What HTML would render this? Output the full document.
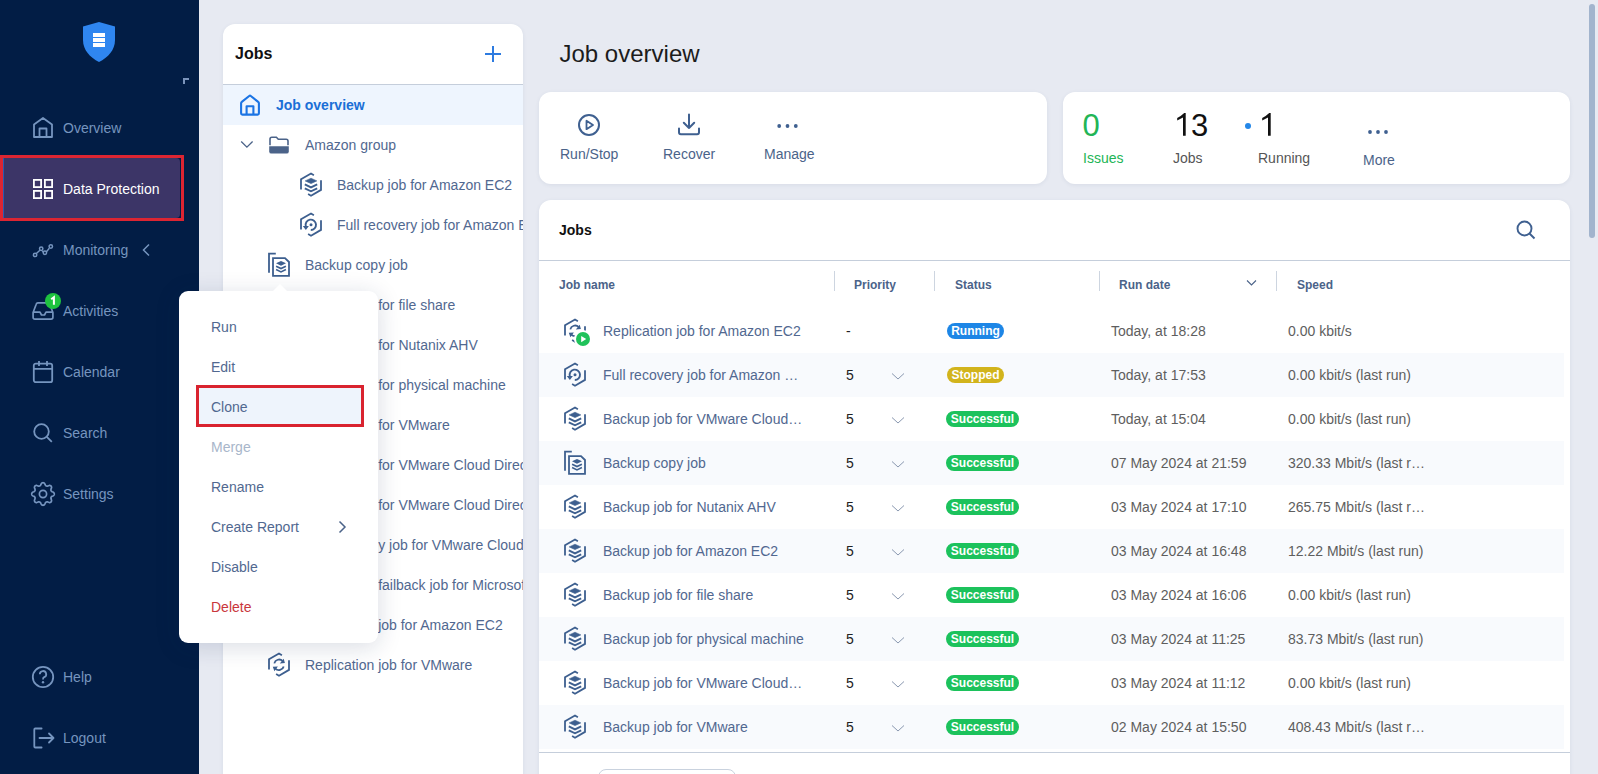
<!DOCTYPE html>
<html><head><meta charset="utf-8">
<style>
*{margin:0;padding:0;box-sizing:border-box}
html,body{width:1598px;height:774px;overflow:hidden;background:#e7eaf2;font-family:"Liberation Sans",sans-serif;position:relative}
.a{position:absolute;white-space:nowrap;line-height:1}
svg.i{position:absolute;overflow:visible}
#side{position:absolute;left:0;top:0;width:199px;height:774px;background:#021d45}
.nav{position:absolute;left:63px;font-size:14px;color:#7695bf;line-height:1}
.card{position:absolute;background:#fff;border-radius:12px;box-shadow:0 1px 4px rgba(40,60,100,.08)}
.tree{font-size:14px;color:#516890}
.th{font-size:12px;font-weight:bold;color:#4b6389}
.row{position:absolute;left:539px;width:1025px;height:44px}
.alt{background:#f8fafd}
.jn{font-size:14px;color:#516890}
.pr{font-size:14px;color:#222}
.dt{font-size:14px;color:#5e5e5e}
.badge{position:absolute;height:16px;border-radius:8px;color:#fff;font-weight:bold;font-size:12px;line-height:16px;text-align:center}
.mi{position:absolute;left:211px;font-size:14px;color:#516890;line-height:1}
</style></head><body>
<svg width="0" height="0" style="position:absolute">
<defs>
<symbol id="hx" viewBox="0 0 30 30"><path d="M5 19.4V9.3L15 3.5L17.9 5.2M25 10.3V19.9L15 25.7L12.1 24" fill="none" stroke="currentColor" stroke-width="1.8"/></symbol>
<symbol id="bk" viewBox="0 0 30 30"><use href="#hx"/><path d="M9.2 10.9L15 8.2L20.8 10.9L15 13.6Z" fill="currentColor" stroke="currentColor" stroke-width="0.6" stroke-linejoin="round"/><path d="M8.8 14.4L15 17.4L21.2 14.4M8.8 18.4L15 21.3L21.2 18.4" fill="none" stroke="currentColor" stroke-width="1.9"/></symbol>
<symbol id="rc" viewBox="0 0 30 30"><use href="#hx"/><path d="M14.8 20A5.2 5.2 0 1 0 9.8 16.2" fill="none" stroke="currentColor" stroke-width="1.9"/><path d="M6.8 15.9H12.9L9.85 19.9Z" fill="currentColor"/><circle cx="15" cy="14.7" r="1.5" fill="currentColor"/></symbol>
<symbol id="rp" viewBox="0 0 30 30"><use href="#hx"/><path d="M10.3 13.4A5 5 0 0 1 18.6 10.9M19.7 16.4A5 5 0 0 1 11.3 18.6" fill="none" stroke="currentColor" stroke-width="1.8"/><path d="M15.8 13.4L20.9 12.9L19.7 8.8Z M8.8 16.7L10.4 21.2L13.9 16.6Z" fill="currentColor"/></symbol>
<symbol id="cp" viewBox="0 0 40 40"><g transform="translate(2 2)"><path d="M9 24.7V5.6H15.8" fill="none" stroke="currentColor" stroke-width="1.8"/><path d="M13 10.1H25L29 14V27.8H13Z" fill="none" stroke="currentColor" stroke-width="1.8"/><path d="M16 15.3L21 12.9L26 15.3L21 17.7Z" fill="currentColor"/><path d="M16.1 18.3L21 20.6L25.9 18.3M16.1 21.6L21 23.9L25.9 21.6" fill="none" stroke="currentColor" stroke-width="1.7"/></g></symbol>
</defs></svg>

<!-- SIDEBAR -->

<div id="side">
<svg class="i" style="left:70px;top:10px" width="60" height="60" viewBox="0 0 60 60"><path d="M13 16.5L29 12L45 16.5V30C45 40 38 47.5 29 52C20 47.5 13 40 13 30Z" fill="#2f86f0"/><rect x="23" y="23" width="12" height="4" fill="#fff"/><rect x="23" y="28" width="12" height="4" fill="#fff"/><rect x="23" y="33" width="12" height="4" fill="#fff"/></svg>
<svg class="i" style="left:182px;top:77px" width="10" height="10" viewBox="0 0 10 10"><path d="M2 7V2H7" fill="none" stroke="#7b94bb" stroke-width="2"/></svg>

<svg class="i" style="left:32px;top:116px" width="24" height="24" viewBox="0 0 24 24"><path d="M2 21V8.5L11 2L20 8.5V21Z M7.5 21V12.5H14.5V21" fill="none" stroke="#7695bf" stroke-width="1.8" stroke-linejoin="round"/></svg>
<div class="nav" style="top:121px">Overview</div>

<div style="position:absolute;left:3px;top:158px;width:177px;height:60px;background:#3c3567;border-radius:0 4px 4px 0;border-left:1.5px solid #2a5bb0"></div>
<div style="position:absolute;left:0;top:155px;width:184px;height:66px;border:3.5px solid #dc2532;"></div>
<svg class="i" style="left:33px;top:179px" width="20" height="20" viewBox="0 0 20 20"><g fill="none" stroke="#fff" stroke-width="1.8"><rect x="0.9" y="0.9" width="7.2" height="7.2"/><rect x="11.9" y="0.9" width="7.2" height="7.2"/><rect x="0.9" y="11.9" width="7.2" height="7.2"/><rect x="11.9" y="11.9" width="7.2" height="7.2"/></g></svg>
<div class="nav" style="top:182px;color:#fff">Data Protection</div>

<svg class="i" style="left:33px;top:243px" width="20" height="16" viewBox="0 0 20 16"><g fill="none" stroke="#7695bf" stroke-width="1.5"><path d="M3.1 10.7L6.9 7.2M9.3 7.9L10.8 9.5M13.2 9.1L16.3 5.2"/><circle cx="2.1" cy="11.9" r="1.7"/><circle cx="8.2" cy="5.7" r="1.7"/><circle cx="11.9" cy="9.7" r="1.7"/><circle cx="17.8" cy="3.5" r="1.7"/></g></svg>
<div class="nav" style="top:243px">Monitoring</div>
<svg class="i" style="left:141px;top:243px" width="10" height="14" viewBox="0 0 10 14"><path d="M8 1.5L2.5 7L8 12.5" fill="none" stroke="#7695bf" stroke-width="1.5"/></svg>

<svg class="i" style="left:32px;top:302px" width="22" height="18" viewBox="0 0 22 18"><path d="M5.9 0.9H16.1Q17.4 0.9 17.8 2.3L20.9 10.5V15.2Q20.9 17.1 19 17.1H3Q1.1 17.1 1.1 15.2V10.5L4.2 2.3Q4.6 0.9 5.9 0.9Z M1.1 10.2H8L9.5 13H12.5L14 10.2H20.9" fill="none" stroke="#7695bf" stroke-width="1.7" stroke-linejoin="round"/></svg>
<div style="position:absolute;left:45px;top:293px;width:16px;height:16px;border-radius:50%;background:#1ec33f"></div><svg class="i" style="left:45px;top:293px" width="16" height="16" viewBox="0 0 16 16"><path d="M6.2 6.2L8.9 4.2V11.8" fill="none" stroke="#fff" stroke-width="2"/></svg>
<div class="nav" style="top:304px">Activities</div>

<svg class="i" style="left:32px;top:360px" width="22" height="24" viewBox="0 0 22 24"><g fill="none" stroke="#7695bf" stroke-width="1.8"><rect x="1.8" y="3.6" width="18.4" height="18.6" rx="2"/><path d="M1.8 8.8H20.2M7 1V6M15 1V6"/></g></svg>
<div class="nav" style="top:365px">Calendar</div>

<svg class="i" style="left:32px;top:422px" width="22" height="22" viewBox="0 0 22 22"><g fill="none" stroke="#7695bf" stroke-width="1.8"><circle cx="9.5" cy="9.5" r="7.3"/><path d="M14.8 14.8L19.8 19.8"/></g></svg>
<div class="nav" style="top:426px">Search</div>

<svg class="i" style="left:30px;top:481px" width="26" height="26" viewBox="0 0 26 26"><g fill="none" stroke="#7695bf" stroke-width="1.7" stroke-linejoin="round"><path d="M13.00 1.70L13.44 1.75L13.87 1.91L14.28 2.18L14.65 2.56L14.95 3.19L15.20 3.83L15.47 4.24L15.74 4.56L16.03 4.80L16.33 4.96L16.66 5.06L17.03 5.09L17.45 5.06L17.93 4.96L18.56 4.69L19.21 4.45L19.75 4.44L20.22 4.54L20.64 4.74L20.99 5.01L21.26 5.36L21.46 5.78L21.56 6.25L21.55 6.79L21.31 7.44L21.04 8.07L20.94 8.55L20.91 8.97L20.94 9.34L21.04 9.67L21.20 9.97L21.44 10.26L21.76 10.53L22.17 10.80L22.81 11.05L23.44 11.35L23.82 11.72L24.09 12.13L24.25 12.56L24.30 13.00L24.25 13.44L24.09 13.87L23.82 14.28L23.44 14.65L22.81 14.95L22.17 15.20L21.76 15.47L21.44 15.74L21.20 16.03L21.04 16.33L20.94 16.66L20.91 17.03L20.94 17.45L21.04 17.93L21.31 18.56L21.55 19.21L21.56 19.75L21.46 20.22L21.26 20.64L20.99 20.99L20.64 21.26L20.22 21.46L19.75 21.56L19.21 21.55L18.56 21.31L17.93 21.04L17.45 20.94L17.03 20.91L16.66 20.94L16.33 21.04L16.03 21.20L15.74 21.44L15.47 21.76L15.20 22.17L14.95 22.81L14.65 23.44L14.28 23.82L13.87 24.09L13.44 24.25L13.00 24.30L12.56 24.25L12.13 24.09L11.72 23.82L11.35 23.44L11.05 22.81L10.80 22.17L10.53 21.76L10.26 21.44L9.97 21.20L9.67 21.04L9.34 20.94L8.97 20.91L8.55 20.94L8.07 21.04L7.44 21.31L6.79 21.55L6.25 21.56L5.78 21.46L5.36 21.26L5.01 20.99L4.74 20.64L4.54 20.22L4.44 19.75L4.45 19.21L4.69 18.56L4.96 17.93L5.06 17.45L5.09 17.03L5.06 16.66L4.96 16.33L4.80 16.03L4.56 15.74L4.24 15.47L3.83 15.20L3.19 14.95L2.56 14.65L2.18 14.28L1.91 13.87L1.75 13.44L1.70 13.00L1.75 12.56L1.91 12.13L2.18 11.72L2.56 11.35L3.19 11.05L3.83 10.80L4.24 10.53L4.56 10.26L4.80 9.97L4.96 9.67L5.06 9.34L5.09 8.97L5.06 8.55L4.96 8.07L4.69 7.44L4.45 6.79L4.44 6.25L4.54 5.78L4.74 5.36L5.01 5.01L5.36 4.74L5.78 4.54L6.25 4.44L6.79 4.45L7.44 4.69L8.07 4.96L8.55 5.06L8.97 5.09L9.34 5.06L9.67 4.96L9.97 4.80L10.26 4.56L10.53 4.24L10.80 3.83L11.05 3.19L11.35 2.56L11.72 2.18L12.13 1.91L12.56 1.75Z"/><circle cx="13" cy="13" r="3.6"/></g></svg>
<div class="nav" style="top:487px">Settings</div>

<svg class="i" style="left:31px;top:665px" width="24" height="24" viewBox="0 0 24 24"><g fill="none" stroke="#7695bf" stroke-width="1.8"><circle cx="12" cy="12" r="10.2"/><path d="M8.8 9.2A3.2 3.2 0 1 1 13.2 12.2C12.2 12.6 12 13.2 12 14.4"/></g><circle cx="12" cy="17.3" r="1.2" fill="#7695bf"/></svg>
<div class="nav" style="top:670px">Help</div>

<svg class="i" style="left:32px;top:727px" width="24" height="22" viewBox="0 0 24 22"><g fill="none" stroke="#7695bf" stroke-width="1.8"><path d="M9.6 1.5H3.3Q2.3 1.5 2.3 2.5V19.5Q2.3 20.5 3.3 20.5H9.6M7.5 11H21.5M17 6.5L21.5 11L17 15.5" stroke-linejoin="round" stroke-linecap="round"/></g></svg>
<div class="nav" style="top:731px">Logout</div>
</div>



<!-- MAIN -->
<div class="a" style="left:559.5px;top:42px;font-size:24px;color:#1c1c1c">Job overview</div>

<div class="card" style="left:539px;top:92px;width:508px;height:92px">
<svg class="i" style="left:38px;top:21px" width="24" height="24" viewBox="0 0 24 24"><circle cx="12" cy="12" r="10" fill="none" stroke="#3f6090" stroke-width="2"/><path d="M9.5 7.8V16.2L16 12Z" fill="none" stroke="#3f6090" stroke-width="1.8" stroke-linejoin="round"/></svg>
<div class="a" style="left:21px;top:55px;font-size:14px;color:#4b6389">Run/Stop</div>
<svg class="i" style="left:138px;top:21px" width="24" height="24" viewBox="0 0 24 24"><path d="M12 1.5V15M6.8 9.8L12 15L17.2 9.8M2 15.5V19.3Q2 21.2 3.9 21.2H20.1Q22 21.2 22 19.3V15.5" fill="none" stroke="#3f6090" stroke-width="2" stroke-linejoin="round" stroke-linecap="round"/></svg>
<div class="a" style="left:124px;top:55px;font-size:14px;color:#4b6389">Recover</div>
<svg class="i" style="left:238px;top:30px" width="22" height="8" viewBox="0 0 22 8"><g fill="#3f6090"><circle cx="2.2" cy="4" r="1.9"/><circle cx="10.5" cy="4" r="1.9"/><circle cx="18.8" cy="4" r="1.9"/></g></svg>
<div class="a" style="left:225px;top:55px;font-size:14px;color:#4b6389">Manage</div>
</div>

<div class="card" style="left:1063px;top:92px;width:507px;height:92px">
<div class="a" style="left:19.5px;top:17.5px;font-size:31px;color:#22b556">0</div>
<div class="a" style="left:20px;top:59px;font-size:14px;color:#22b556">Issues</div>
<svg class="i" style="left:113.5px;top:21.2px" width="10" height="24" viewBox="0 0 10 24"><path d="M6 22.8V4.6L0.2 7.5V4.9Q4.5 2.8 7.2 0H8.7V22.8Z" fill="#111"/></svg><div class="a" style="left:128px;top:18px;font-size:31px;color:#111">3</div>
<div class="a" style="left:110px;top:59px;font-size:14px;color:#555">Jobs</div>
<div style="position:absolute;left:181.5px;top:30.8px;width:6.5px;height:6.5px;border-radius:50%;background:#2487e8"></div>
<svg class="i" style="left:199px;top:21.2px" width="10" height="24" viewBox="0 0 10 24"><path d="M6 22.8V4.6L0.2 7.5V4.9Q4.5 2.8 7.2 0H8.7V22.8Z" fill="#111"/></svg>
<div class="a" style="left:195px;top:59px;font-size:14px;color:#555">Running</div>
<svg class="i" style="left:304px;top:36px" width="22" height="8" viewBox="0 0 22 8"><g fill="#3f6090"><circle cx="3" cy="4" r="1.9"/><circle cx="11" cy="4" r="1.9"/><circle cx="19" cy="4" r="1.9"/></g></svg>
<div class="a" style="left:300px;top:61px;font-size:14px;color:#4b6389">More</div>
</div>

<div class="card" style="left:539px;top:200px;width:1031px;height:600px;border-radius:12px 12px 0 0">
<div class="a" style="left:20px;top:23px;font-size:14px;font-weight:bold;color:#111">Jobs</div>
<svg class="i" style="left:976px;top:19px" width="22" height="22" viewBox="0 0 22 22"><g fill="none" stroke="#3f6090" stroke-width="1.9"><circle cx="9.5" cy="9.5" r="7"/><path d="M14.5 14.5L19.5 19.5"/></g></svg>
<div style="position:absolute;left:0;top:60px;width:1031px;height:1px;background:#c5cedb"></div>
<div class="a th" style="left:20px;top:79px">Job name</div>
<div style="position:absolute;left:295px;top:71px;width:1px;height:20px;background:#cdd5e0"></div>
<div class="a th" style="left:315px;top:79px">Priority</div>
<div style="position:absolute;left:395px;top:71px;width:1px;height:20px;background:#cdd5e0"></div>
<div class="a th" style="left:416px;top:79px">Status</div>
<div style="position:absolute;left:560px;top:71px;width:1px;height:20px;background:#cdd5e0"></div>
<div class="a th" style="left:580px;top:79px">Run date</div>
<svg class="i" style="left:707px;top:79px" width="11" height="8" viewBox="0 0 11 8"><path d="M1 1.5L5.5 6L10 1.5" fill="none" stroke="#4b6389" stroke-width="1.1"/></svg>
<div style="position:absolute;left:737px;top:71px;width:1px;height:20px;background:#cdd5e0"></div>
<div class="a th" style="left:758px;top:79px">Speed</div>
<div style="position:absolute;left:0;top:552px;width:1031px;height:1px;background:#c5cedb"></div>
<div style="position:absolute;left:59px;top:569px;width:138px;height:40px;border:1px solid #c9d2de;border-radius:8px;background:#fff"></div>
</div>
<div class="row" style="top:309px"></div>
<svg class="i" style="left:560px;top:316px;color:#3d5f8f" width="30" height="30"><use href="#rp"/></svg>
<div style="position:absolute;left:574px;top:330px;width:18px;height:18px;border-radius:50%;background:#fff"></div><svg class="i" style="left:576px;top:332px" width="14" height="14" viewBox="0 0 14 14"><circle cx="7" cy="7" r="7" fill="#1fc25a"/><path d="M5.2 4V10.2L10.2 7.1Z" fill="#fff"/></svg>
<div class="a jn" style="left:603px;top:324px">Replication job for Amazon EC2</div>
<div class="a pr" style="left:846px;top:324px">-</div>
<div class="badge" style="left:947px;top:323px;width:57px;background:#1d86e6">Running</div>
<div class="a dt" style="left:1111px;top:324px">Today, at 18:28</div>
<div class="a dt" style="left:1288px;top:324px">0.00 kbit/s</div>
<div class="row alt" style="top:353px"></div>
<svg class="i" style="left:560px;top:360px;color:#3d5f8f" width="30" height="30"><use href="#rc"/></svg>
<div class="a jn" style="left:603px;top:368px">Full recovery job for Amazon …</div>
<div class="a pr" style="left:846px;top:368px">5</div>
<svg class="i" style="left:891px;top:372px" width="14" height="9" viewBox="0 0 14 9"><path d="M1 1.5L7 7L13 1.5" fill="none" stroke="#8a98b0" stroke-width="1"/></svg>
<div class="badge" style="left:947px;top:367px;width:57px;background:#d2b41c">Stopped</div>
<div class="a dt" style="left:1111px;top:368px">Today, at 17:53</div>
<div class="a dt" style="left:1288px;top:368px">0.00 kbit/s (last run)</div>
<div class="row" style="top:397px"></div>
<svg class="i" style="left:560px;top:404px;color:#3d5f8f" width="30" height="30"><use href="#bk"/></svg>
<div class="a jn" style="left:603px;top:412px">Backup job for VMware Cloud…</div>
<div class="a pr" style="left:846px;top:412px">5</div>
<svg class="i" style="left:891px;top:416px" width="14" height="9" viewBox="0 0 14 9"><path d="M1 1.5L7 7L13 1.5" fill="none" stroke="#8a98b0" stroke-width="1"/></svg>
<div class="badge" style="left:946px;top:411px;width:73px;background:#1cc25c">Successful</div>
<div class="a dt" style="left:1111px;top:412px">Today, at 15:04</div>
<div class="a dt" style="left:1288px;top:412px">0.00 kbit/s (last run)</div>
<div class="row alt" style="top:441px"></div>
<svg class="i" style="left:554px;top:444px;color:#3d5f8f" width="40" height="40"><use href="#cp"/></svg>
<div class="a jn" style="left:603px;top:456px">Backup copy job</div>
<div class="a pr" style="left:846px;top:456px">5</div>
<svg class="i" style="left:891px;top:460px" width="14" height="9" viewBox="0 0 14 9"><path d="M1 1.5L7 7L13 1.5" fill="none" stroke="#8a98b0" stroke-width="1"/></svg>
<div class="badge" style="left:946px;top:455px;width:73px;background:#1cc25c">Successful</div>
<div class="a dt" style="left:1111px;top:456px">07 May 2024 at 21:59</div>
<div class="a dt" style="left:1288px;top:456px">320.33 Mbit/s (last r…</div>
<div class="row" style="top:485px"></div>
<svg class="i" style="left:560px;top:492px;color:#3d5f8f" width="30" height="30"><use href="#bk"/></svg>
<div class="a jn" style="left:603px;top:500px">Backup job for Nutanix AHV</div>
<div class="a pr" style="left:846px;top:500px">5</div>
<svg class="i" style="left:891px;top:504px" width="14" height="9" viewBox="0 0 14 9"><path d="M1 1.5L7 7L13 1.5" fill="none" stroke="#8a98b0" stroke-width="1"/></svg>
<div class="badge" style="left:946px;top:499px;width:73px;background:#1cc25c">Successful</div>
<div class="a dt" style="left:1111px;top:500px">03 May 2024 at 17:10</div>
<div class="a dt" style="left:1288px;top:500px">265.75 Mbit/s (last r…</div>
<div class="row alt" style="top:529px"></div>
<svg class="i" style="left:560px;top:536px;color:#3d5f8f" width="30" height="30"><use href="#bk"/></svg>
<div class="a jn" style="left:603px;top:544px">Backup job for Amazon EC2</div>
<div class="a pr" style="left:846px;top:544px">5</div>
<svg class="i" style="left:891px;top:548px" width="14" height="9" viewBox="0 0 14 9"><path d="M1 1.5L7 7L13 1.5" fill="none" stroke="#8a98b0" stroke-width="1"/></svg>
<div class="badge" style="left:946px;top:543px;width:73px;background:#1cc25c">Successful</div>
<div class="a dt" style="left:1111px;top:544px">03 May 2024 at 16:48</div>
<div class="a dt" style="left:1288px;top:544px">12.22 Mbit/s (last run)</div>
<div class="row" style="top:573px"></div>
<svg class="i" style="left:560px;top:580px;color:#3d5f8f" width="30" height="30"><use href="#bk"/></svg>
<div class="a jn" style="left:603px;top:588px">Backup job for file share</div>
<div class="a pr" style="left:846px;top:588px">5</div>
<svg class="i" style="left:891px;top:592px" width="14" height="9" viewBox="0 0 14 9"><path d="M1 1.5L7 7L13 1.5" fill="none" stroke="#8a98b0" stroke-width="1"/></svg>
<div class="badge" style="left:946px;top:587px;width:73px;background:#1cc25c">Successful</div>
<div class="a dt" style="left:1111px;top:588px">03 May 2024 at 16:06</div>
<div class="a dt" style="left:1288px;top:588px">0.00 kbit/s (last run)</div>
<div class="row alt" style="top:617px"></div>
<svg class="i" style="left:560px;top:624px;color:#3d5f8f" width="30" height="30"><use href="#bk"/></svg>
<div class="a jn" style="left:603px;top:632px">Backup job for physical machine</div>
<div class="a pr" style="left:846px;top:632px">5</div>
<svg class="i" style="left:891px;top:636px" width="14" height="9" viewBox="0 0 14 9"><path d="M1 1.5L7 7L13 1.5" fill="none" stroke="#8a98b0" stroke-width="1"/></svg>
<div class="badge" style="left:946px;top:631px;width:73px;background:#1cc25c">Successful</div>
<div class="a dt" style="left:1111px;top:632px">03 May 2024 at 11:25</div>
<div class="a dt" style="left:1288px;top:632px">83.73 Mbit/s (last run)</div>
<div class="row" style="top:661px"></div>
<svg class="i" style="left:560px;top:668px;color:#3d5f8f" width="30" height="30"><use href="#bk"/></svg>
<div class="a jn" style="left:603px;top:676px">Backup job for VMware Cloud…</div>
<div class="a pr" style="left:846px;top:676px">5</div>
<svg class="i" style="left:891px;top:680px" width="14" height="9" viewBox="0 0 14 9"><path d="M1 1.5L7 7L13 1.5" fill="none" stroke="#8a98b0" stroke-width="1"/></svg>
<div class="badge" style="left:946px;top:675px;width:73px;background:#1cc25c">Successful</div>
<div class="a dt" style="left:1111px;top:676px">03 May 2024 at 11:12</div>
<div class="a dt" style="left:1288px;top:676px">0.00 kbit/s (last run)</div>
<div class="row alt" style="top:705px"></div>
<svg class="i" style="left:560px;top:712px;color:#3d5f8f" width="30" height="30"><use href="#bk"/></svg>
<div class="a jn" style="left:603px;top:720px">Backup job for VMware</div>
<div class="a pr" style="left:846px;top:720px">5</div>
<svg class="i" style="left:891px;top:724px" width="14" height="9" viewBox="0 0 14 9"><path d="M1 1.5L7 7L13 1.5" fill="none" stroke="#8a98b0" stroke-width="1"/></svg>
<div class="badge" style="left:946px;top:719px;width:73px;background:#1cc25c">Successful</div>
<div class="a dt" style="left:1111px;top:720px">02 May 2024 at 15:50</div>
<div class="a dt" style="left:1288px;top:720px">408.43 Mbit/s (last r…</div>
<div style="position:absolute;left:1589px;top:4px;width:6px;height:234px;border-radius:3px;background:#a2b4cd"></div>

<!-- TREE PANEL -->
<div class="card" style="left:223px;top:24px;width:300px;height:780px;overflow:hidden;border-radius:12px 12px 0 0">
<div class="a" style="left:12px;top:21.5px;font-size:16px;font-weight:bold;color:#111">Jobs</div>
<svg class="i" style="left:262px;top:22px" width="16" height="16" viewBox="0 0 16 16"><path d="M8 0V16M0 8H16" stroke="#2d7be0" stroke-width="2"/></svg>
<div style="position:absolute;left:0;top:60px;width:300px;height:1px;background:#c5cedb"></div>
<div style="position:absolute;left:0;top:61px;width:300px;height:40px;background:#eef5fe"></div>
<svg class="i" style="left:16px;top:70px" width="22" height="22" viewBox="0 0 22 22"><path d="M2.1 19.3V9.2Q2.1 8.4 2.8 7.9L10.2 2Q11 1.4 11.8 2L19.2 7.9Q19.9 8.4 19.9 9.2V19.3Q19.9 20.6 18.6 20.6H3.4Q2.1 20.6 2.1 19.3Z M7.6 20.6V12.2H14.4V20.6" fill="none" stroke="#1b74e4" stroke-width="2.1" stroke-linejoin="round"/></svg>
<div class="a" style="left:53px;top:74px;font-size:14px;font-weight:bold;color:#1b6fd6">Job overview</div>
<svg class="i" style="left:17px;top:116px" width="14" height="9" viewBox="0 0 14 9"><path d="M1.2 1.5L6.9 7.2L12.6 1.5" fill="none" stroke="#4b6389" stroke-width="1.3"/></svg>
<svg class="i" style="left:46px;top:111px" width="20" height="19" viewBox="0 0 20 19"><path d="M1 10.2V4Q1 2.3 2.8 2.3H7.4L9.3 4.3H17.2Q19 4.3 19 6.1V10.2" fill="none" stroke="#4b6389" stroke-width="1.6"/><path d="M0.2 11.2H19.8V16.4Q19.8 18.6 17.6 18.6H2.4Q0.2 18.6 0.2 16.4Z" fill="#4b6389"/></svg>
<div class="a tree" style="left:82px;top:114px">Amazon group</div>
<svg class="i" style="left:73px;top:146px;color:#3d5f8f" width="30" height="30"><use href="#bk"/></svg>
<div class="a tree" style="left:114px;top:154px">Backup job for Amazon EC2</div>
<svg class="i" style="left:73px;top:186px;color:#3d5f8f" width="30" height="30"><use href="#rc"/></svg>
<div class="a tree" style="left:114px;top:194px">Full recovery job for Amazon EC2</div>
<svg class="i" style="left:35px;top:222px;color:#3d5f8f" width="40" height="40"><use href="#cp"/></svg>
<div class="a tree" style="left:82px;top:234px">Backup copy job</div>
<svg class="i" style="left:41px;top:266px;color:#3d5f8f" width="30" height="30"><use href="#bk"/></svg>
<div class="a tree" style="left:82px;top:274px">Backup job for file share</div>
<svg class="i" style="left:41px;top:306px;color:#3d5f8f" width="30" height="30"><use href="#bk"/></svg>
<div class="a tree" style="left:82px;top:314px">Backup job for Nutanix AHV</div>
<svg class="i" style="left:41px;top:346px;color:#3d5f8f" width="30" height="30"><use href="#bk"/></svg>
<div class="a tree" style="left:82px;top:354px">Backup job for physical machine</div>
<svg class="i" style="left:41px;top:386px;color:#3d5f8f" width="30" height="30"><use href="#bk"/></svg>
<div class="a tree" style="left:82px;top:394px">Backup job for VMware</div>
<svg class="i" style="left:41px;top:426px;color:#3d5f8f" width="30" height="30"><use href="#bk"/></svg>
<div class="a tree" style="left:82px;top:434px">Backup job for VMware Cloud Director</div>
<svg class="i" style="left:41px;top:466px;color:#3d5f8f" width="30" height="30"><use href="#bk"/></svg>
<div class="a tree" style="left:82px;top:474px">Backup job for VMware Cloud Director</div>
<svg class="i" style="left:35px;top:502px;color:#3d5f8f" width="40" height="40"><use href="#cp"/></svg>
<div class="a tree" style="left:82px;top:514px">Backup copy job for VMware Cloud Director</div>
<svg class="i" style="left:41px;top:546px;color:#3d5f8f" width="30" height="30"><use href="#rp"/></svg>
<div class="a tree" style="left:82px;top:554px">Replication failback job for Microsoft Hyper-V</div>
<svg class="i" style="left:41px;top:586px;color:#3d5f8f" width="30" height="30"><use href="#rp"/></svg>
<div class="a tree" style="left:82px;top:594px">Replication job for Amazon EC2</div>
<svg class="i" style="left:41px;top:626px;color:#3d5f8f" width="30" height="30"><use href="#rp"/></svg>
<div class="a tree" style="left:82px;top:634px">Replication job for VMware</div>
</div>

<!-- MENU -->
<div style="position:absolute;left:179px;top:291px;width:199px;height:352px;background:#fff;border-radius:9px;box-shadow:0 4px 24px rgba(20,40,80,.16)"></div>
<svg class="i" style="left:270px;top:282px" width="20" height="10" viewBox="0 0 20 10"><path d="M2 10L10 2L18 10Z" fill="#fff"/></svg>
<div style="position:absolute;left:196px;top:385px;width:168px;height:42px;border:3px solid #d9232f;background:#eef4fc"></div>
<div class="mi" style="top:320px">Run</div>
<div class="mi" style="top:360px">Edit</div>
<div class="mi" style="top:400px">Clone</div>
<div class="mi" style="top:440px;color:#a8b6ca">Merge</div>
<div class="mi" style="top:480px">Rename</div>
<div class="mi" style="top:520px">Create Report</div>
<svg class="i" style="left:337px;top:520px" width="10" height="14" viewBox="0 0 10 14"><path d="M2.5 1.5L8 7L2.5 12.5" fill="none" stroke="#4b6389" stroke-width="1.5"/></svg>
<div class="mi" style="top:560px">Disable</div>
<div class="mi" style="top:600px;color:#c9363c">Delete</div>
</body></html>
